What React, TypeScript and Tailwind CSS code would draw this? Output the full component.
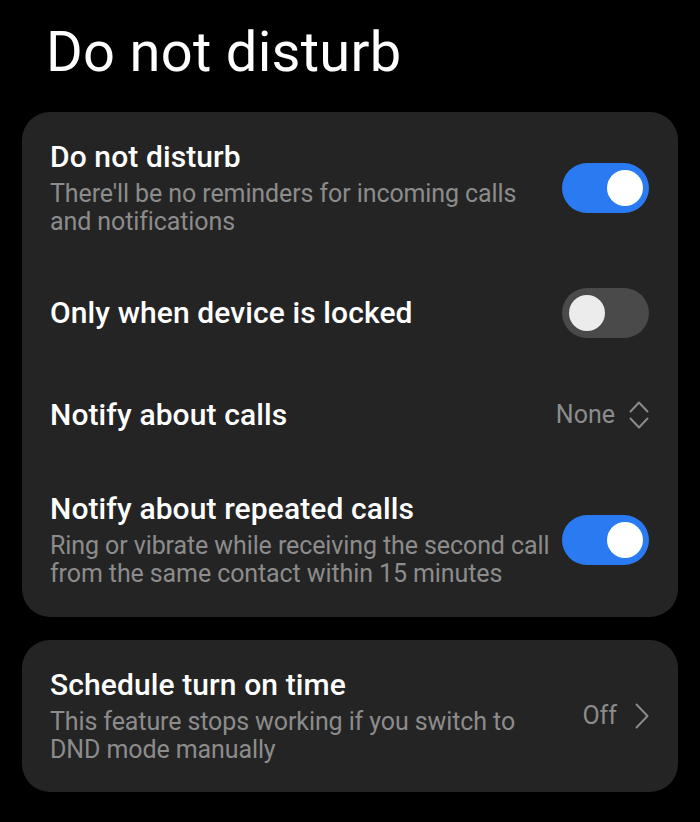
import React, { useState } from 'react';

const font = { fontFamily: 'Roboto, "Noto Sans", sans-serif' };

interface ToggleProps {
  on: boolean;
  onChange: (v: boolean) => void;
}

const Toggle: React.FC<ToggleProps> = ({ on, onChange }) => (
  <button
    type="button"
    onClick={() => onChange(!on)}
    className={`relative h-[50px] w-[87px] shrink-0 rounded-full ${on ? 'bg-[#2a7bf1]' : 'bg-[#4a4a4a]'}`}
  >
    <span
      className={`absolute top-[7px] h-[36px] w-[36px] rounded-full ${on ? 'left-[45px] bg-white' : 'left-[7px] bg-[#ececec]'}`}
    />
  </button>
);

const UpDown = () => (
  <svg width="20" height="28" viewBox="0 0 20 28" fill="none" stroke="#8a8a8a" strokeWidth="2" strokeLinecap="round" strokeLinejoin="round">
    <path d="M1.5 10.5 L10 1.5 L18.5 10.5" />
    <path d="M1.5 17.5 L10 26.5 L18.5 17.5" />
  </svg>
);

const ChevronRight = () => (
  <svg width="14" height="26" viewBox="0 0 14 26" fill="none" stroke="#8a8a8a" strokeWidth="2" strokeLinecap="round" strokeLinejoin="round">
    <path d="M1.5 1.5 L12.5 13 L1.5 24.5" />
  </svg>
);

interface RowProps {
  title: string;
  subtitle?: string[];
  right: React.ReactNode;
}

const Row: React.FC<RowProps> = ({ title, subtitle, right }) => (
  <div className="flex min-h-[102px] items-center justify-between py-[26px] pl-[28px] pr-[29px]">
    <div className="flex flex-col">
      <div className="text-[30px] font-medium leading-[34px] text-white tracking-[0.1px]">{title}</div>
      {subtitle && (
        <div className="mt-[6px] text-[25px] leading-[28px] text-[#8c8c8c] tracking-[-0.1px]">
          {subtitle.map((s) => (
            <div key={s}>{s}</div>
          ))}
        </div>
      )}
    </div>
    {right}
  </div>
);

export default function App() {
  const [dnd, setDnd] = useState(true);
  const [locked, setLocked] = useState(false);
  const [repeated, setRepeated] = useState(true);

  return (
    <div className="min-h-[822px] w-[700px] bg-black" style={font}>
      <h1 className="pl-[46px] pt-[19px] pb-[27px] text-[56px] font-normal leading-[66px] text-white tracking-[0.3px]">
        Do not disturb
      </h1>
      <div className="mx-[22px] rounded-[28px] bg-[#242424] pt-[2px] pb-[3px]">
        <Row
          title="Do not disturb"
          subtitle={["There'll be no reminders for incoming calls", 'and notifications']}
          right={<Toggle on={dnd} onChange={setDnd} />}
        />
        <Row title="Only when device is locked" right={<Toggle on={locked} onChange={setLocked} />} />
        <Row
          title="Notify about calls"
          right={
            <div className="flex items-center gap-[14px] text-[25px] text-[#8c8c8c]">
              <span>None</span>
              <UpDown />
            </div>
          }
        />
        <Row
          title="Notify about repeated calls"
          subtitle={['Ring or vibrate while receiving the second call', 'from the same contact within 15 minutes']}
          right={<Toggle on={repeated} onChange={setRepeated} />}
        />
      </div>
      <div className="mx-[22px] mt-[23px] rounded-[28px] bg-[#242424] py-[2px]">
        <Row
          title="Schedule turn on time"
          subtitle={['This feature stops working if you switch to', 'DND mode manually']}
          right={
            <div className="flex items-center gap-[18px] text-[25px] text-[#8c8c8c]">
              <span>Off</span>
              <ChevronRight />
            </div>
          }
        />
      </div>
    </div>
  );
}
